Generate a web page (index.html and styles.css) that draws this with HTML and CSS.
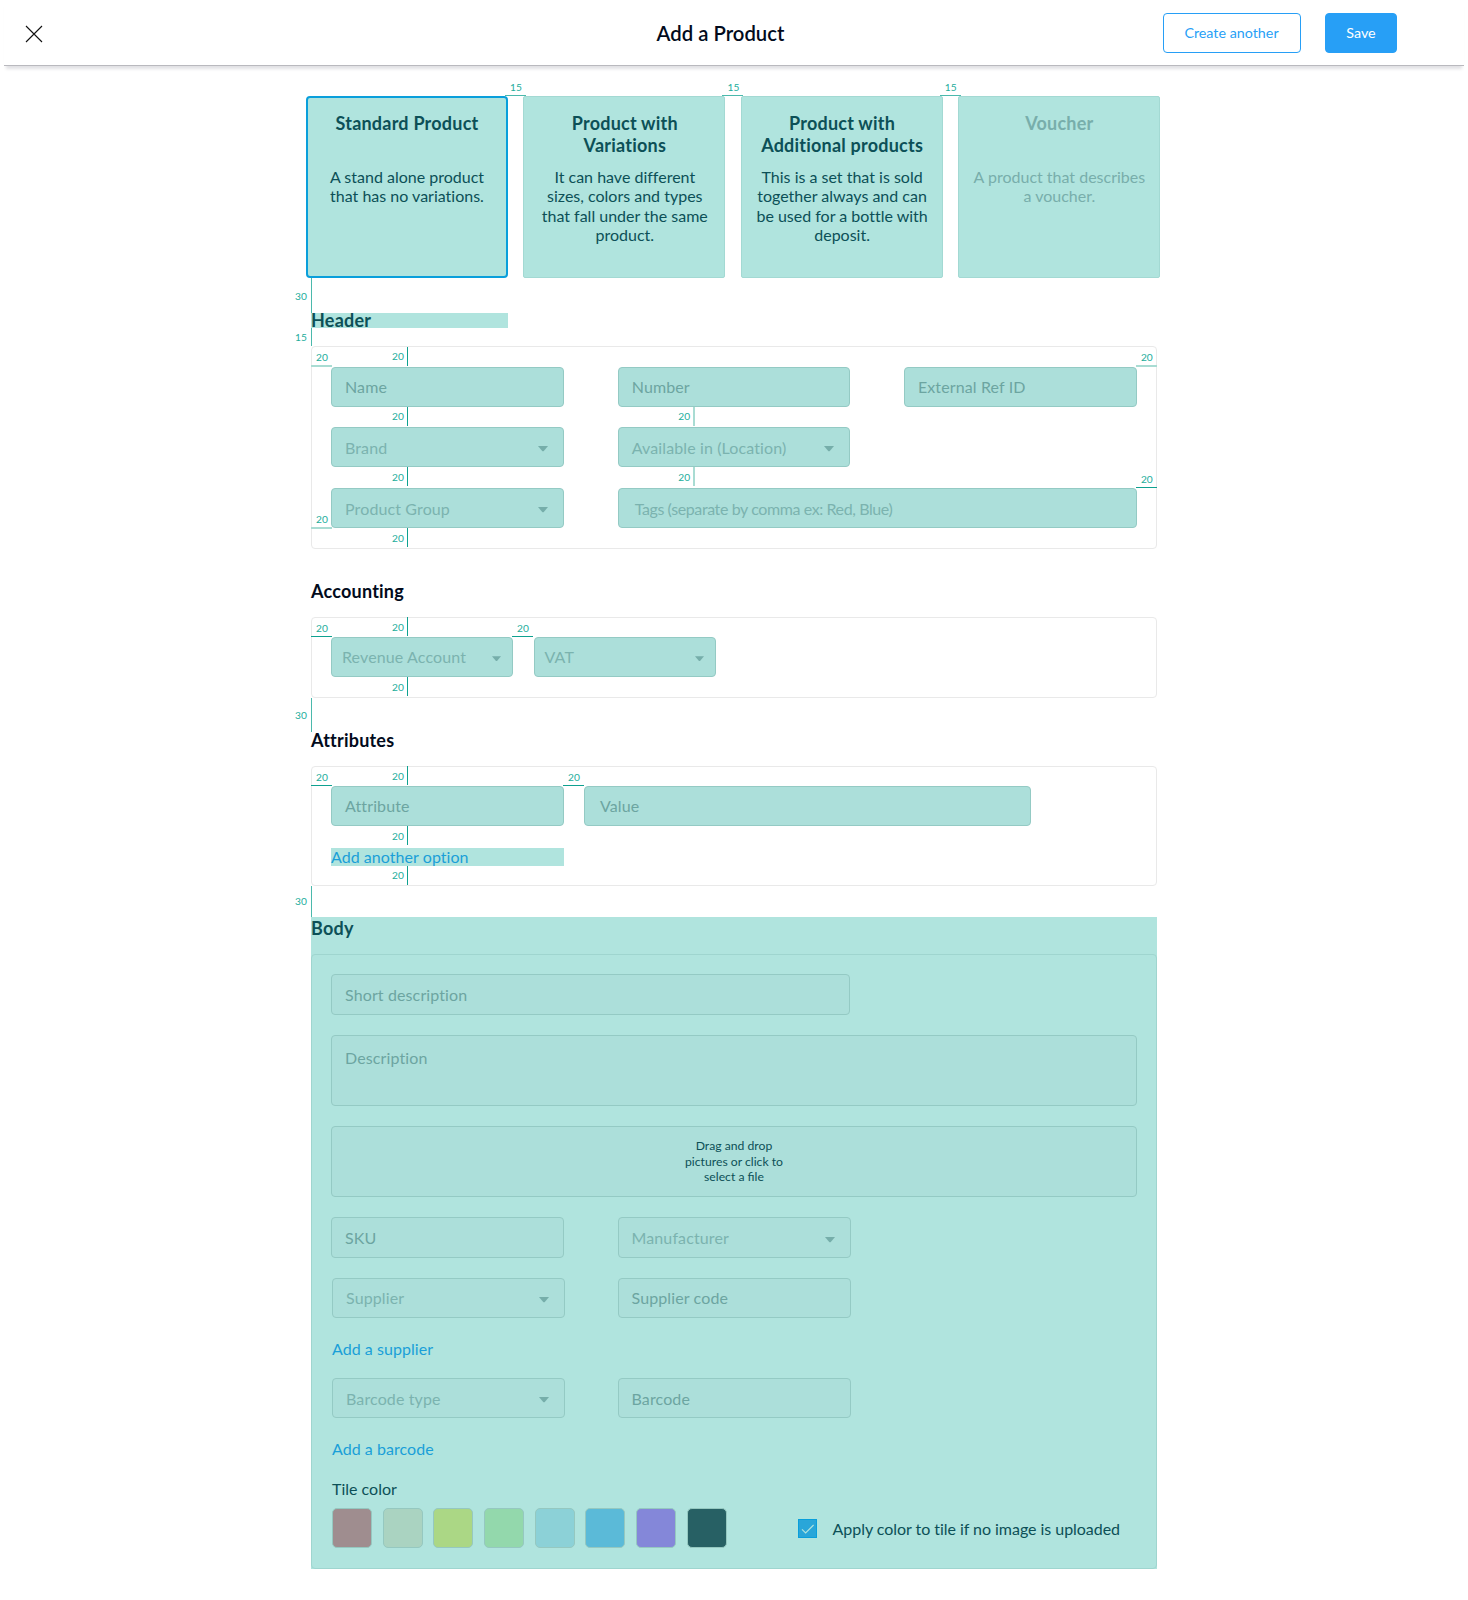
FILE: index.html
```html
<!DOCTYPE html>
<html lang="en">
<head>
<meta charset="utf-8">
<title>Add a Product</title>
<link rel="stylesheet" href="styles.css">
</head>
<body>
<header class="topbar">
  <svg class="close" viewBox="0 0 18 18"><path d="M1 1L17 17M17 1L1 17"/></svg>
  <h1>Add a Product</h1>
  <div class="actions">
    <button class="btn outline">Create another</button>
    <button class="btn solid">Save</button>
  </div>
</header>
<main>
  <section class="types">
    <article class="card selected"><h3>Standard Product</h3><p>A stand alone product<br>that has no variations.</p><i class="gap h next"><b>15</b></i></article>
    <article class="card"><h3>Product with<br>Variations</h3><p>It can have different<br>sizes, colors and types<br>that fall under the same<br>product.</p><i class="gap h next"><b>15</b></i></article>
    <article class="card"><h3>Product with<br>Additional products</h3><p>This is a set that is sold<br>together always and can<br>be used for a bottle with<br>deposit.</p><i class="gap h next"><b>15</b></i></article>
    <article class="card disabled"><h3>Voucher</h3><p>A product that describes<br>a voucher.</p></article>
  </section>

  <section class="block header-block">
    <i class="gap v before-header"><b>30</b></i>
    <h2 class="marked">Header</h2>
    <i class="gap v after-header"><b>15</b></i>
    <div class="panel header-grid">
      <div class="field"><span>Name</span><i class="gap v above"><b>20</b></i><i class="gap v below"><b>20</b></i><i class="gap h left soft"><b>20</b></i></div>
      <div class="field"><span>Number</span><i class="gap v below soft"><b>20</b></i></div>
      <div class="field"><span>External Ref ID</span><i class="gap h right soft"><b>20</b></i></div>
      <div class="field select"><span>Brand</span><svg class="caret" viewBox="0 0 10 6"><path d="M0 0H10L5.8 4.9Q5 5.7 4.2 4.9Z"/></svg><i class="gap v below"><b>20</b></i></div>
      <div class="field select"><span>Available in (Location)</span><svg class="caret" viewBox="0 0 10 6"><path d="M0 0H10L5.8 4.9Q5 5.7 4.2 4.9Z"/></svg><i class="gap v below soft"><b>20</b></i></div>
      <div class="field select row-start"><span>Product Group</span><svg class="caret" viewBox="0 0 10 6"><path d="M0 0H10L5.8 4.9Q5 5.7 4.2 4.9Z"/></svg><i class="gap v below"><b>20</b></i><i class="gap h left foot soft"><b>20</b></i></div>
      <div class="field select tags"><span>Tags (separate by comma ex: Red, Blue)</span><i class="gap h right"><b>20</b></i></div>
    </div>
  </section>

  <section class="block accounting">
    <h2>Accounting</h2>
    <div class="panel row">
      <div class="field select compact"><span>Revenue Account</span><svg class="caret" viewBox="0 0 10 6"><path d="M0 0H10L5.8 4.9Q5 5.7 4.2 4.9Z"/></svg><i class="gap v above"><b>20</b></i><i class="gap v below"><b>20</b></i><i class="gap h left"><b>20</b></i><i class="gap h right"><b>20</b></i></div>
      <div class="field select compact"><span>VAT</span><svg class="caret" viewBox="0 0 10 6"><path d="M0 0H10L5.8 4.9Q5 5.7 4.2 4.9Z"/></svg></div>
    </div>
  </section>

  <section class="block attributes">
    <i class="gap v before-attributes"><b>30</b></i>
    <h2>Attributes</h2>
    <div class="panel">
      <div class="row">
        <div class="field"><span>Attribute</span><i class="gap v above"><b>20</b></i><i class="gap v below"><b>20</b></i><i class="gap h left"><b>20</b></i><i class="gap h right"><b>20</b></i></div>
        <div class="field value"><span>Value</span></div>
      </div>
      <a class="link marked-link">Add another option<i class="gap v below"><b>20</b></i></a>
    </div>
  </section>

  <section class="block body-block">
    <i class="gap v before-body"><b>30</b></i>
    <h2>Body</h2>
    <div class="panel body-panel">
      <div class="field two-thirds"><span>Short description</span></div>
      <div class="field area"><span>Description</span></div>
      <div class="field drop"><p>Drag and drop<br>pictures or click to<br>select a file</p></div>
      <div class="pair tall">
        <div class="field"><span>SKU</span></div>
        <div class="field select"><span>Manufacturer</span><svg class="caret" viewBox="0 0 10 6"><path d="M0 0H10L5.8 4.9Q5 5.7 4.2 4.9Z"/></svg></div>
      </div>
      <div class="pair shifted">
        <div class="field select"><span>Supplier</span><svg class="caret" viewBox="0 0 10 6"><path d="M0 0H10L5.8 4.9Q5 5.7 4.2 4.9Z"/></svg></div>
        <div class="field"><span>Supplier code</span></div>
      </div>
      <a class="link">Add a supplier</a>
      <div class="pair shifted">
        <div class="field select"><span>Barcode type</span><svg class="caret" viewBox="0 0 10 6"><path d="M0 0H10L5.8 4.9Q5 5.7 4.2 4.9Z"/></svg></div>
        <div class="field"><span>Barcode</span></div>
      </div>
      <a class="link">Add a barcode</a>
      <div class="tile-label">Tile color</div>
      <div class="tile-row">
        <div class="swatches">
          <span class="swatch rose"></span><span class="swatch sage"></span><span class="swatch lime"></span><span class="swatch mint"></span><span class="swatch aqua"></span><span class="swatch sky"></span><span class="swatch violet"></span><span class="swatch dark"></span>
        </div>
        <div class="apply">
          <svg class="check" viewBox="0 0 19 19"><rect x=".5" y=".5" width="18" height="18"/><path d="M4 10.3L7.6 14L15.6 6"/></svg>
          <span>Apply color to tile if no image is uploaded</span>
        </div>
      </div>
    </div>
  </section>
</main>
</body>
</html>
```
FILE: styles.css
```css
* { box-sizing: border-box; }
body {
  margin: 0;
  background: #fff;
  color: #020b1c;
  font: 400 16px/19.3px Lato, "Liberation Sans", sans-serif;
  font-variant-ligatures: none;
}
h1, h2, h3, p { margin: 0; }

.topbar {
  display: grid;
  grid-template-columns: 1fr auto 1fr;
  align-items: center;
  height: 66px;
  margin: 0 4px;
  padding: 0 67px 0 21px;
  border-bottom: 1px solid #b9b9be;
  box-shadow: 0 5px 3px -2px rgba(20, 20, 50, .13);
}
.close { width: 18px; height: 18px; margin-top: 2px; fill: none; stroke: #111; stroke-width: 1.1; }
h1 { margin-left: 19px; font-size: 20.3px; line-height: 24px; font-weight: 600; }
.actions { display: flex; justify-content: flex-end; gap: 24px; }
.btn {
  height: 40px;
  padding: 0;
  border: 1px solid #279ff6;
  border-radius: 4px;
  font: 400 14.3px/17px Lato, sans-serif;
}
.outline { width: 138px; padding-right: 1px; background: #fff; color: #279ff6; }
.solid { width: 72px; background: #279ff6; color: #fff; }

main { width: 846px; margin-left: 311px; padding-top: 30px; }

.types { display: grid; grid-template-columns: repeat(4, 202px); column-gap: 15.3px; margin-left: -5px; width: 856px; }
.card {
  position: relative;
  height: 182px;
  padding: 15px 0 0 1px;
  border: 1px solid #a3d9d3;
  border-radius: 2px;
  background: #b0e4de;
  color: #0c5057;
  text-align: center;
}
.card h3 { height: 55px; font-size: 18px; line-height: 22.3px; font-weight: 700; letter-spacing: .22px; }
.selected { padding: 14px 0 0; border: 2px solid #099fdb; border-radius: 4px; }
.disabled, .disabled h3 { color: #78aeab; }

/* Spacing callouts laid over the form */
.gap { position: absolute; background: #0fa190; font-style: normal; letter-spacing: 0; }
.gap b { position: absolute; width: 14px; height: 12px; color: #23ad9c; font-size: 10.2px; line-height: 12px; font-weight: 400; text-align: center; }
.gap.v { left: 75px; width: 1px; height: 19px; }
.gap.v b { right: 3px; top: calc(50% - 6px); }
.gap.h { top: -2px; width: 21px; height: 1px; }
.gap.h b { left: 4px; top: -14px; }
.gap.above { top: -21px; }
.gap.below { top: calc(100% + 1px); }
.gap.left { left: -21px; }
.gap.right { left: 100%; }
.gap.next { left: calc(100% - 1.8px); background: #4bb9ac; }
.selected .gap.next { top: -3px; left: calc(100% - 1px); }
.gap.foot { top: 38px; }
.gap.soft { background: #a9dcd3; }
.gap.v.soft { left: 74.5px; width: 2px; }
.gap.v.soft b { right: 4px; }
.gap.h.soft { height: 2px; top: -3px; }
.gap.h.foot.soft { top: 38px; }
.block > .gap { left: 0; background: #4bb9ac; }
.block > .gap b { right: 4px; }

.block { position: relative; }
h2 { font-size: 18px; line-height: 22px; font-weight: 700; letter-spacing: .22px; }
.panel { border: 1px solid #e9e9e9; border-radius: 4px; padding: 19.5px 19px; }
.field {
  position: relative;
  display: flex;
  align-items: center;
  justify-content: space-between;
  width: 233px;
  height: 40px;
  padding: 0 15px 0 13px;
  border: 1px solid #94cac4;
  border-radius: 4px;
  background: #acdfda;
  color: #6ca5a1;
  letter-spacing: .12px;
}
.select { color: #7bb3af; }
.caret { width: 10px; height: 6px; margin-top: 4px; fill: #76aeaa; }

.header-block { padding-top: 35px; }
.marked { width: 197px; height: 15px; line-height: 15px; background: #b0e4de; color: #0c5057; }
.header-block .panel { margin-top: 18px; }
.gap.before-header { top: 0; height: 35px; }
.gap.after-header { top: 50px; height: 18px; }
.header-grid { display: grid; grid-template-columns: 233px 232.5px 233px; column-gap: 53.7px; row-gap: 20.5px; height: 203px; }
.header-grid .field { width: auto; }
.row-start { grid-column: 1; }
.header-grid .tags { grid-column: span 2; padding: 1px 16px 0; letter-spacing: -.4px; }

.accounting { padding-top: 30.5px; }
.accounting .panel { margin-top: 15px; }
.row { display: flex; gap: 20.5px; }
.compact { width: 182px; padding: 0 11px 0 10px; }
.compact .caret { width: 9px; }

.attributes { padding-top: 31px; }
.attributes .panel { margin-top: 15px; }
.gap.before-attributes { top: 0; height: 34px; }
.attributes .row { gap: 20px; }
.value { width: 447px; padding-left: 15px; }
.link { display: block; color: #1a9fd8; letter-spacing: .05px; }
.marked-link { position: relative; width: 233px; height: 18px; margin-top: 21.5px; line-height: 18px; background: #b0e4de; }
.marked-link .below { left: 76px; top: 100%; }

.body-block { margin-top: 30.5px; background: #b0e4de; height: 652px; }
.body-block h2 { height: 37px; line-height: 22px; color: #0c5057; }
.gap.before-body { top: -30.5px; height: 30.5px; }
.body-panel { height: 615px; border-color: #9fd5cf; display: flex; flex-direction: column; }
.two-thirds { width: 519px; height: 41px; flex: none; margin-bottom: 20px; padding-top: 1px; }
.area, .drop { width: auto; height: 71px; margin-bottom: 20px; }
.area { align-items: flex-start; padding-top: 12px; }
.drop { justify-content: center; padding: 1px 14px; color: #0c5057; text-align: center; font-size: 12.2px; line-height: 15.4px; letter-spacing: 0; font-variant-ligatures: normal; }
.pair { display: flex; gap: 53.5px; margin-bottom: 20px; }
.tall .field { height: 41px; }
.shifted { margin-left: 1px; gap: 52.5px; }
.body-panel .link { margin: 1px 0 20px 1px; }
.tile-label { margin-left: 1px; color: #0c5057; }
.tile-row { display: flex; justify-content: space-between; align-items: center; margin: 10px 17px 0 1px; }
.swatches { display: flex; gap: 10.7px; }
.swatch { width: 40px; height: 40px; border: 1px solid #95c8c0; border-radius: 5px; }
.rose { background: #9f8d8f; }
.sage { background: #aad3c1; }
.lime { background: #abd785; }
.mint { background: #93d8ac; }
.aqua { background: #8cd1d7; }
.sky { background: #5bbad8; }
.violet { background: #8487d9; }
.dark { background: #276064; }
.apply { display: flex; align-items: center; gap: 15.5px; padding-top: 1.5px; color: #0c5057; letter-spacing: -.04px; }
.check { width: 19px; height: 19px; }
.check rect { fill: #29a6d9; stroke: #099fdb; }
.check path { fill: none; stroke: #b0e4de; stroke-width: 1.1; }
```
